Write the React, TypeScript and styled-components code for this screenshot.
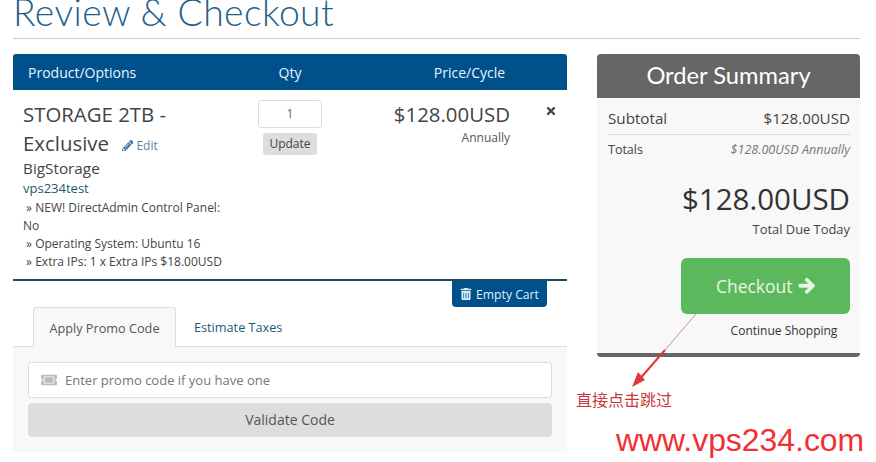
import React from "react";
import styled, { createGlobalStyle } from "styled-components";
import { FaPencilAlt, FaTrashAlt, FaTimes, FaArrowRight, FaTicketAlt } from "react-icons/fa";

const Global = createGlobalStyle`
  html, body { margin: 0; padding: 0; background: #fff; overflow: hidden; }
  body { font-family: "Open Sans", "Liberation Sans", sans-serif; color: #333; }
  * { box-sizing: border-box; }
`;

const Page = styled.div`
  position: relative;
  width: 876px;
  height: 462px;
  overflow: hidden;
  padding: 0 16px 0 13px;
`;
const Title = styled.h1`
  margin: 0 0 15px;
  height: 39px;
  border-bottom: 1px solid #ccc;
  font-family: "Lato", sans-serif;
  font-weight: 300;
  font-size: 37.3px;
  line-height: 24px;
  color: #1f5f8b;
  letter-spacing: 0.4px;
  white-space: nowrap;
`;
const Columns = styled.div`
  display: flex;
  gap: 30px;
  align-items: flex-start;
`;
const Left = styled.div`
  width: 554px;
  flex: none;
`;
const Right = styled.div`
  width: 263px;
  flex: none;
`;
const TableHead = styled.div`
  display: grid;
  grid-template-columns: 200px 154px 200px;
  align-items: center;
  height: 36px;
  background: #00508c;
  border-radius: 3px 3px 0 0;
  color: #e8f6fb;
  font-size: 14px;
  font-weight: 500;
`;
const HeadCell = styled.div<{ $center?: boolean; $pad: number }>`
  text-align: ${(p) => (p.$center ? "center" : "left")};
  padding-left: ${(p) => p.$pad}px;
`;
const ItemRow = styled.div`
  display: grid;
  grid-template-columns: 205px 124px 158px 1fr;
  height: 191px;
  padding: 10px 0 0 10px;
  border-bottom: 2px solid #1d4d5e;
`;
const ItemName = styled.div`
  font-size: 20.4px;
  line-height: 29px;
  color: #444;
`;
const EditLink = styled.span`
  display: inline-flex;
  align-items: center;
  gap: 3px;
  margin-left: 13px;
  font-size: 12px;
  color: #5d84a3;
  svg { color: #3f78b0; font-size: 11.5px; }
`;
const Group = styled.div`
  margin-top: -2px;
  font-size: 15.3px;
  line-height: 21px;
  color: #444;
`;
const Domain = styled.div`
  margin-bottom: 2px;
  font-size: 13px;
  line-height: 18px;
  color: #1e5a6e;
`;
const Option = styled.div`
  font-size: 12px;
  line-height: 18px;
  color: #444;
`;
const QtyCell = styled.div`
  display: flex;
  flex-direction: column;
  align-items: center;
`;
const QtyInput = styled.div`
  width: 64px;
  height: 28px;
  border: 1px solid #ddd;
  border-radius: 3px;
  background: #fff;
  color: #666;
  font-size: 12px;
  line-height: 26px;
  text-align: center;
`;
const UpdateButton = styled.div`
  margin-top: 5px;
  width: 54px;
  height: 22px;
  border-radius: 3px;
  background: #ddd;
  color: #444;
  font-size: 12px;
  line-height: 22px;
  text-align: center;
`;
const PriceCell = styled.div`
  text-align: right;
`;
const Price = styled.div`
  font-size: 20.4px;
  line-height: 29px;
  color: #444;
`;
const Cycle = styled.div`
  margin-top: 1px;
  font-size: 12px;
  line-height: 16px;
  color: #555;
`;
const RemoveCell = styled.div`
  padding: 4px 0 0 35px;
  font-size: 12px;
  color: #444;
`;
const CartActions = styled.div`
  display: flex;
  justify-content: flex-end;
  padding-right: 20px;
`;
const EmptyCart = styled.div`
  display: flex;
  align-items: center;
  justify-content: center;
  gap: 4px;
  width: 95px;
  height: 26px;
  background: #00508c;
  border-radius: 0 0 4px 4px;
  color: #dff1f8;
  font-size: 12.2px;
  font-weight: 500;
  svg { font-size: 12px; }
`;
const Tabs = styled.div`
  display: flex;
  align-items: flex-end;
  height: 40px;
  padding-left: 20px;
  border-bottom: 1px solid #ddd;
`;
const Tab = styled.div<{ $active?: boolean }>`
  height: 40px;
  margin-bottom: -1px;
  font-size: 12.7px;
  line-height: 40px;
  ${(p) =>
    p.$active
      ? `width: 143px; text-align: center; color: #555; background: #f8f8f8; border: 1px solid #ddd; border-bottom: 1px solid #f8f8f8; border-radius: 3px 3px 0 0;`
      : `margin-left: 18px; color: #1e5a78;`}
`;
const TabPanel = styled.div`
  display: flex;
  flex-direction: column;
  gap: 5px;
  height: 105px;
  padding: 15px;
  background: #f8f8f8;
`;
const PromoInput = styled.div`
  display: flex;
  align-items: center;
  gap: 8px;
  height: 36px;
  padding-left: 12px;
  background: #fff;
  border: 1px solid #ddd;
  border-radius: 3px;
  color: #777;
  font-size: 13px;
  svg { color: #bbb; font-size: 16px; }
`;
const ValidateButton = styled.div`
  height: 34px;
  background: #ddd;
  border-radius: 4px;
  color: #555;
  font-size: 14px;
  line-height: 34px;
  text-align: center;
`;
const SummaryHead = styled.div`
  height: 44px;
  background: #666;
  border-radius: 4px 4px 0 0;
  color: #fff;
  font-family: "Lato", sans-serif;
  font-size: 23.7px;
  font-weight: 400;
  line-height: 43px;
  text-align: center;
`;
const SummaryBody = styled.div`
  height: 259px;
  padding: 6px 10px 0 11px;
  background: #f8f8f8;
  border-bottom: 4px solid #666;
  border-radius: 0 0 4px 4px;
`;
const SubRow = styled.div`
  display: flex;
  justify-content: space-between;
  align-items: center;
  height: 31px;
  padding-bottom: 3px;
  border-bottom: 1px solid #ddd;
  font-size: 15.2px;
  color: #444;
`;
const TotalsRow = styled.div`
  display: flex;
  justify-content: space-between;
  align-items: center;
  height: 29px;
  font-size: 12.5px;
  color: #444;
`;
const Recurring = styled.span`
  font-size: 12.6px;
  font-style: italic;
  color: #777;
`;
const GrandTotal = styled.div`
  margin-top: 17px;
  font-size: 29.5px;
  line-height: 36px;
  text-align: right;
  color: #333;
`;
const DueLabel = styled.div`
  margin-top: 3px;
  font-size: 12.9px;
  line-height: 18px;
  text-align: right;
  color: #444;
`;
const CheckoutBlock = styled.div`
  display: flex;
  flex-direction: column;
  align-items: flex-end;
  margin-top: 20px;
`;
const CheckoutButton = styled.div`
  display: flex;
  align-items: center;
  justify-content: center;
  gap: 5px;
  width: 169px;
  height: 56px;
  background: #5cb85c;
  border-radius: 6px;
  color: #e6f7e4;
  font-size: 17.5px;
  font-weight: 500;
  svg { stroke: currentColor; stroke-width: 30; }
`;
const Continue = styled.div`
  width: 169px;
  margin-top: 8px;
  padding-left: 37px;
  font-size: 12px;
  line-height: 17px;
  text-align: center;
  white-space: nowrap;
  color: #333;
`;
const Arrow = styled.svg`
  position: absolute;
  left: 0;
  top: 0;
  pointer-events: none;
`;
const Note = styled.div`
  position: absolute;
  left: 576px;
  top: 388px;
  font-family: "Noto Sans CJK SC", sans-serif;
  font-size: 16px;
  line-height: 22px;
  color: #c8383a;
`;
const Watermark = styled.div`
  position: absolute;
  left: 616px;
  top: 422px;
  font-family: "Liberation Sans", sans-serif;
  font-size: 31.9px;
  line-height: 36px;
  color: #f03033;
  white-space: nowrap;
`;

export default function App() {
  return (
    <Page>
      <Global />
      <Title>Review &amp; Checkout</Title>
      <Columns>
        <Left>
          <TableHead>
            <HeadCell $pad={15}>Product/Options</HeadCell>
            <HeadCell $center $pad={0}>Qty</HeadCell>
            <HeadCell $center $pad={5}>Price/Cycle</HeadCell>
          </TableHead>
          <ItemRow>
            <div>
              <ItemName>
                STORAGE 2TB - Exclusive
                <EditLink><FaPencilAlt />Edit</EditLink>
              </ItemName>
              <Group>BigStorage</Group>
              <Domain>vps234test</Domain>
              <Option>&nbsp;» NEW! DirectAdmin Control Panel: No</Option>
              <Option>&nbsp;» Operating System: Ubuntu 16</Option>
              <Option>&nbsp;» Extra IPs: 1 x Extra IPs $18.00USD</Option>
            </div>
            <QtyCell>
              <QtyInput>1</QtyInput>
              <UpdateButton>Update</UpdateButton>
            </QtyCell>
            <PriceCell>
              <Price>$128.00USD</Price>
              <Cycle>Annually</Cycle>
            </PriceCell>
            <RemoveCell><FaTimes /></RemoveCell>
          </ItemRow>
          <CartActions>
            <EmptyCart><FaTrashAlt />Empty Cart</EmptyCart>
          </CartActions>
          <Tabs>
            <Tab $active>Apply Promo Code</Tab>
            <Tab>Estimate Taxes</Tab>
          </Tabs>
          <TabPanel>
            <PromoInput><FaTicketAlt />Enter promo code if you have one</PromoInput>
            <ValidateButton>Validate Code</ValidateButton>
          </TabPanel>
        </Left>
        <Right>
          <SummaryHead>Order Summary</SummaryHead>
          <SummaryBody>
            <SubRow><span>Subtotal</span><span>$128.00USD</span></SubRow>
            <TotalsRow><span>Totals</span><Recurring>$128.00USD Annually</Recurring></TotalsRow>
            <GrandTotal>$128.00USD</GrandTotal>
            <DueLabel>Total Due Today</DueLabel>
            <CheckoutBlock>
              <CheckoutButton>Checkout <FaArrowRight /></CheckoutButton>
              <Continue>Continue Shopping</Continue>
            </CheckoutBlock>
          </SummaryBody>
        </Right>
      </Columns>
      <Arrow width="876" height="462" viewBox="0 0 876 462">
        <line x1="696" y1="314" x2="665" y2="350" stroke="#d98a94" strokeWidth="1" />
        <line x1="665" y1="350" x2="638" y2="381" stroke="#e0363c" strokeWidth="2" />
        <polygon points="632,387 638,372 645,380" fill="#e0363c" />
      </Arrow>
      <Note>直接点击跳过</Note>
      <Watermark>www.vps234.com</Watermark>
    </Page>
  );
}
